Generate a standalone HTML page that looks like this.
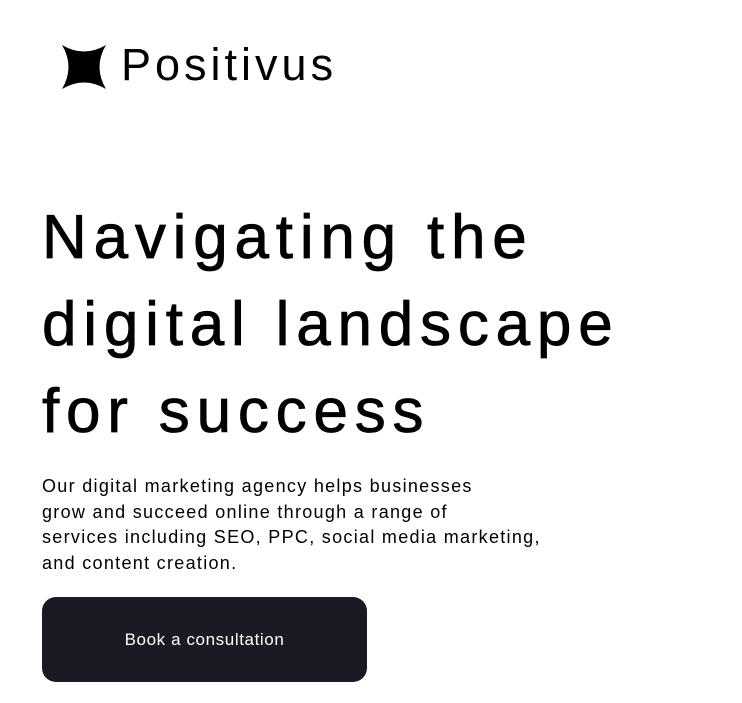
<!DOCTYPE html>
<html><head><style>
body{margin:0;width:742px;height:703px;background:#fff;font-family:"Liberation Sans",sans-serif;color:#000;position:relative;overflow:hidden}
.logo{position:absolute;left:62px;top:45px}
.brand{position:absolute;left:121px;top:39px;font-size:45px;letter-spacing:4px}
h1{position:absolute;left:42px;top:194px;margin:0;font-weight:normal;font-size:62px;line-height:87px;letter-spacing:6.8px;-webkit-text-stroke:0.8px #000}
p{position:absolute;left:42px;top:474px;margin:0;font-size:18px;line-height:25.7px;width:560px;letter-spacing:1.3px}
.btn{position:absolute;left:42px;top:597px;width:325px;height:85px;background:#191A23;border-radius:14px;color:#fff;font-size:17px;letter-spacing:0.6px;display:flex;align-items:center;justify-content:center}
</style></head><body>
<svg class="logo" width="44" height="44" viewBox="0 0 44 44"><path d="M0 0 Q22 13 44 0 Q31 22 44 44 Q22 31 0 44 Q13 22 0 0Z" fill="#000"/></svg>
<div class="brand">Positivus</div>
<h1>Navigating the<br>digital landscape<br>for success</h1>
<p>Our digital marketing agency helps businesses<br>grow and succeed online through a range of<br>services including SEO, PPC, social media marketing,<br>and content creation.</p>
<div class="btn">Book a consultation</div>
</body></html>
